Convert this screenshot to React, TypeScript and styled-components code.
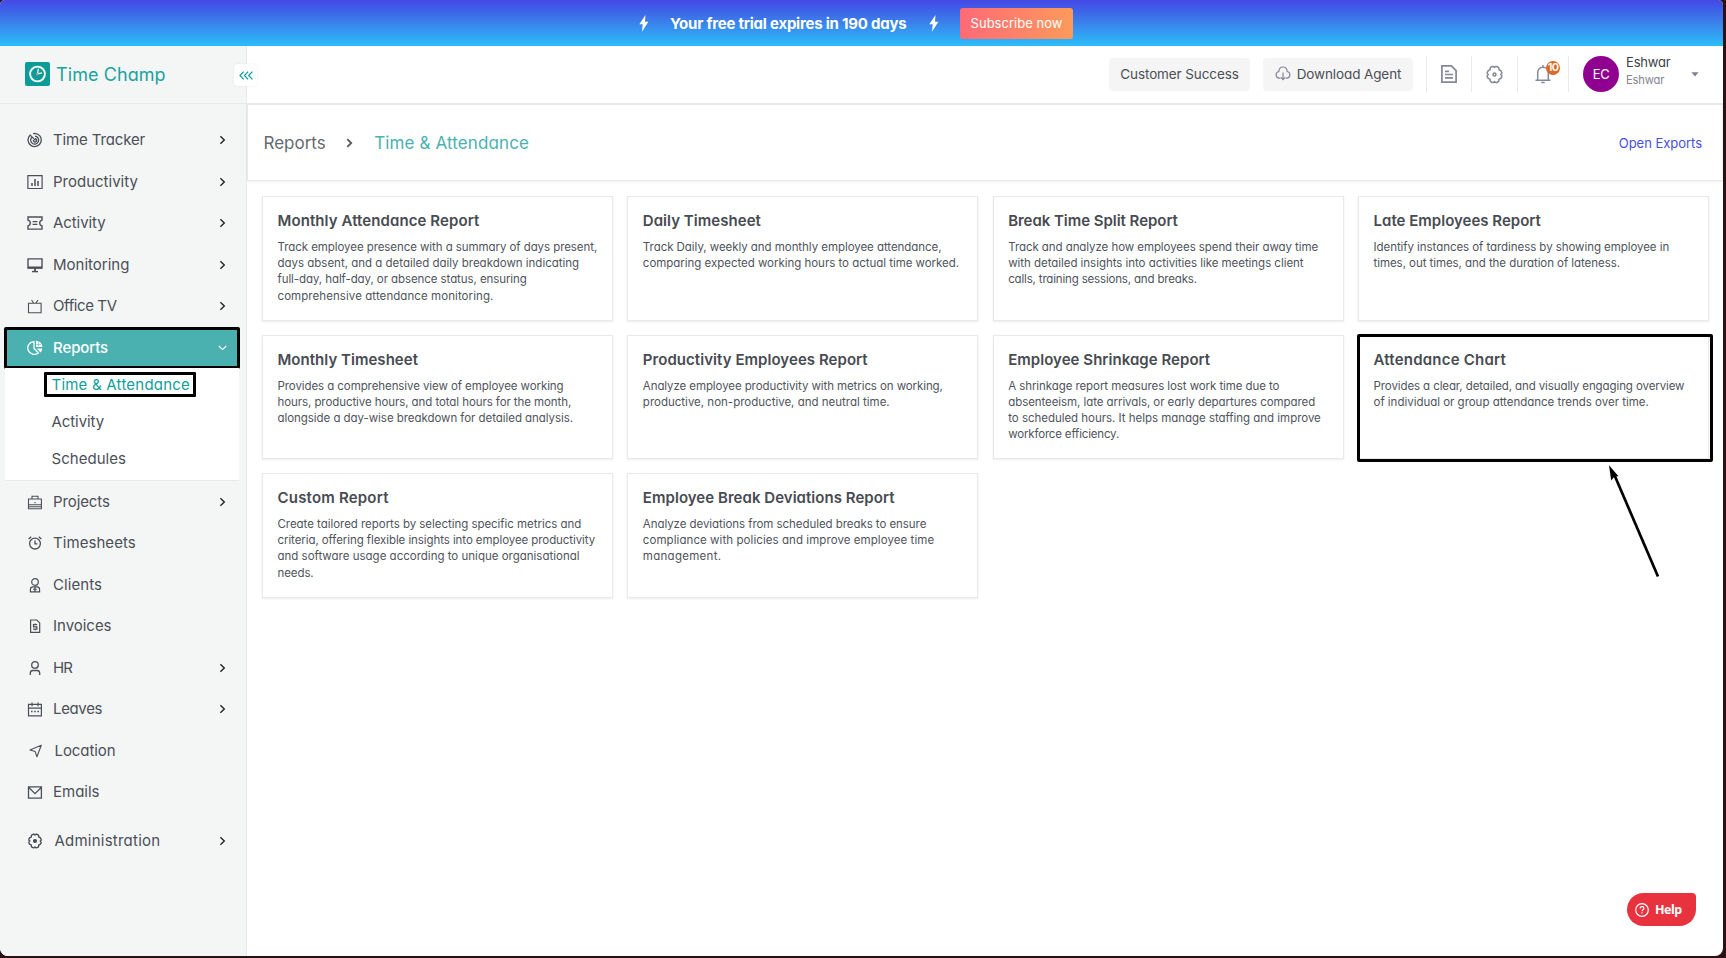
import React from "react";
import styled, { createGlobalStyle, css } from "styled-components";

const GlobalStyle = createGlobalStyle`
  *, *::before, *::after { box-sizing: border-box; }
  body {
    margin: 0;
    background: #2a1113;
    font-family: Inter, "Open Sans", sans-serif;
    font-feature-settings: "cv11";
    color: #4b4f57;
  }
  h2, p { margin: 0; font-weight: inherit; }
`;

const TEAL = "#0f9f9b";
const LINE = "#e6ebea";

const Window = styled.div`
  position: relative;
  display: flex;
  flex-direction: column;
  width: 1723px;
  height: 956px;
  background: #fff;
  border-radius: 5px 5px 8px 8px;
  overflow: hidden;
`;

/* ---------- trial banner ---------- */

const Banner = styled.div`
  display: flex;
  align-items: center;
  height: 46px;
  flex: none;
  padding-left: 639px;
  background: linear-gradient(180deg, #4348e4 0%, #3a82ec 50%, #2bbef9 100%);
  color: #fff;
`;

const BannerText = styled.span`
  width: 238px;
  margin: 0 21px;
  font-size: 15px;
  font-weight: 700;
  letter-spacing: -0.22px;
  white-space: nowrap;
`;

const SubscribeButton = styled.button`
  width: 113px;
  height: 31px;
  margin-left: 21px;
  padding: 0 0 1px;
  border: 0;
  border-radius: 3px;
  background: linear-gradient(90deg, #ff6a76, #fd9a5b);
  color: #fff;
  font: 400 13px Inter, sans-serif;
  font-feature-settings: "cv11";
  letter-spacing: 0.02px;
  white-space: nowrap;
`;

/* ---------- frame ---------- */

const Body = styled.div`
  display: flex;
  flex: 1;
  min-height: 0;
`;

const Sidebar = styled.aside`
  display: flex;
  flex-direction: column;
  width: 247px;
  flex: none;
  background: #f4f6f5;
  border-right: 1px solid ${LINE};
`;

const Main = styled.main`
  display: flex;
  flex-direction: column;
  flex: 1;
  min-width: 0;
`;

/* ---------- sidebar ---------- */

const Brand = styled.div`
  position: relative;
  display: flex;
  align-items: center;
  gap: 6px;
  height: 58px;
  padding: 0 0 1px 25px;
  border-bottom: 1px solid ${LINE};
  color: #1ba29e;
  font-size: 18px;
  letter-spacing: 0.08px;
`;

const CollapseButton = styled.button`
  position: absolute;
  left: 234px;
  top: 18px;
  display: flex;
  align-items: center;
  justify-content: center;
  width: 23px;
  height: 22px;
  padding: 0;
  border: 0;
  border-radius: 4px;
  background: #fff;
  box-shadow: 0 0 2px rgba(0, 0, 0, 0.1);
  color: ${TEAL};
`;

const Nav = styled.nav`
  display: flex;
  flex-direction: column;
  padding-top: 15.25px;
`;

const NavItem = styled.div<{ $indent?: number; $ls?: number; $gapTop?: number; $active?: boolean }>`
  display: flex;
  align-items: center;
  gap: ${(p) => p.$indent ?? 10.5}px;
  height: 41.5px;
  margin-top: ${(p) => p.$gapTop ?? 0}px;
  padding: 0 20px 0 26.5px;
  font-size: 15px;
  letter-spacing: ${(p) => p.$ls ?? 0}px;
  white-space: nowrap;
  ${(p) =>
    p.$active &&
    css`
      width: 236px;
      height: 42px;
      margin: -0.25px 0 -0.25px 4px;
      padding: 0 10px 0 19.5px;
      border: 3px solid #000;
      border-radius: 2px;
      background: #4bb1b0;
      color: #fff;
      font-weight: 500;
    `}
`;

const NavLabel = styled.span`
  flex: 1;
  padding-bottom: 1px;
`;

const SubMenu = styled.div`
  display: flex;
  flex-direction: column;
  align-items: flex-start;
  width: 234px;
  height: 112.5px;
  margin-left: 5px;
  padding: 4px 0 0 39px;
  background: #fff;
  border-bottom: 1px solid ${LINE};
`;

const SubItem = styled.div<{ $current?: boolean; $ls?: number }>`
  display: flex;
  align-items: center;
  height: 37px;
  padding: 0 0 2px 7.5px;
  font-size: 15px;
  letter-spacing: ${(p) => p.$ls ?? 0}px;
  white-space: nowrap;
  ${(p) =>
    p.$current &&
    css`
      width: 152px;
      height: 25px;
      margin-bottom: 7px;
      padding: 0 0 1px 4.5px;
      border: 3px solid #000;
      border-radius: 1px;
      color: ${TEAL};
    `}
`;

/* ---------- header ---------- */

const Header = styled.header`
  display: flex;
  align-items: center;
  justify-content: flex-end;
  height: 59px;
  flex: none;
  padding: 0 24px 1px 0;
  border-bottom: 2px solid ${LINE};
`;

const HeaderButton = styled.button<{ $w: number }>`
  display: flex;
  align-items: center;
  justify-content: center;
  gap: 6px;
  width: ${(p) => p.$w}px;
  height: 33px;
  margin-right: 13px;
  padding: 0 0 1px;
  border: 0;
  border-radius: 4px;
  background: #f5f5f5;
  color: #4b4f57;
  font: 400 13.5px Inter, sans-serif;
  font-feature-settings: "cv11";
  letter-spacing: -0.11px;
  white-space: nowrap;
`;

const Tool = styled.div<{ $w: number; $push?: number }>`
  position: relative;
  display: flex;
  align-items: center;
  justify-content: center;
  width: ${(p) => p.$w}px;
  height: 36px;
  padding-left: ${(p) => p.$push ?? 0}px;
  border-left: 1px solid ${LINE};
  color: #85879a;
`;

const Badge = styled.span`
  position: absolute;
  left: 28px;
  top: 5px;
  width: 14px;
  height: 14px;
  border-radius: 50%;
  background: #db6827;
  color: #fff;
  font-size: 11px;
  font-weight: 600;
  line-height: 13.5px;
  letter-spacing: -0.6px;
  text-align: center;
`;

const Profile = styled.div`
  display: flex;
  align-items: center;
  height: 36px;
  padding-left: 14px;
  border-left: 1px solid ${LINE};
`;

const Avatar = styled.div`
  width: 36px;
  height: 36px;
  border-radius: 50%;
  background: #900090;
  color: #fff;
  font: 400 13px/36px Inter, sans-serif;
  letter-spacing: -0.4px;
  text-align: center;
`;

const Names = styled.div`
  display: flex;
  flex-direction: column;
  width: 65px;
  margin: -5px 0 0 7px;
`;

const Name = styled.span<{ $minor?: boolean }>`
  font-size: ${(p) => (p.$minor ? 11.2 : 13)}px;
  line-height: 17.5px;
  letter-spacing: -0.18px;
  color: ${(p) => (p.$minor ? "#85868f" : "#3b3f47")};
`;

/* ---------- breadcrumb ---------- */

const Crumbs = styled.div`
  display: flex;
  align-items: center;
  height: 76px;
  flex: none;
  padding: 0 20px 0 15.5px;
  border-left: 1px solid ${LINE};
  border-bottom: 1px solid ${LINE};
  border-right: 1px solid #f1f3f3;
  box-shadow: 0 1px 2px rgba(0, 0, 0, 0.06);
  font-size: 17px;
  color: #66696f;
  white-space: nowrap;
  svg { margin: 0 21px 0 20.5px; }
`;

const Current = styled.span`
  flex: 1;
  color: #4bb1b0;
  letter-spacing: 0.12px;
`;

const ExportLink = styled.a`
  font-size: 13px;
  color: #4650da;
  letter-spacing: -0.03px;
`;

/* ---------- report cards ---------- */

const CardGrid = styled.section`
  display: grid;
  grid-template-columns: repeat(4, 351px);
  grid-auto-rows: 124.5px;
  column-gap: 14.35px;
  row-gap: 14px;
  padding: 15px 0 0 15px;
`;

const Card = styled.article`
  position: relative;
  padding: 14px 14px 0 14.5px;
  background: #fff;
  border: 1px solid ${LINE};
  box-shadow: 0 1px 2px rgba(0, 0, 0, 0.08);
`;

const CardTitle = styled.h2<{ $ls: number }>`
  font-size: 15px;
  font-weight: 600;
  line-height: 20px;
  letter-spacing: ${(p) => p.$ls}px;
  color: #474b52;
`;

const CardText = styled.p`
  margin-top: 8px;
  font-size: 11.5px;
  line-height: 16.2px;
  color: #4f545c;
`;

const Line = styled.span<{ $ls: number }>`
  display: block;
  letter-spacing: ${(p) => p.$ls}px;
  white-space: nowrap;
`;

const Highlight = styled.div`
  position: absolute;
  left: -2px;
  top: -2px;
  width: 356px;
  height: 128px;
  border: 3px solid #000;
  border-radius: 2px;
`;

const Arrow = styled.svg`
  position: absolute;
  left: 1600px;
  top: 460px;
`;

const HelpButton = styled.button`
  position: absolute;
  left: 1627px;
  top: 893px;
  display: flex;
  align-items: center;
  gap: 6px;
  width: 69px;
  height: 33px;
  padding: 0 0 0 8px;
  border: 0;
  border-radius: 17px 4px 17px 17px;
  background: #e8323e;
  color: #fff;
  font: 700 12.5px "Noto Sans", sans-serif;
  letter-spacing: -0.5px;
`;

/* ---------- icons ---------- */

const Icon = ({ children, w = 1.2, size = 16 }: { children: React.ReactNode; w?: number; size?: number }) => (
  <svg width={size} height={size} viewBox="0 0 16 16" fill="none" stroke="currentColor" strokeWidth={w}>
    {children}
  </svg>
);

const Bolt = () => (
  <svg width="10" height="17" viewBox="0 0 10 17" fill="#fff">
    <path d="M6.5 0 .3 9.3h3.4L3 16.8l6.4-10H6z" />
  </svg>
);

const Chevron = () => (
  <svg width="7" height="10" viewBox="0 0 7 10" fill="none" stroke="#22252a" strokeWidth="1.4">
    <path d="M1.4 1.2 5.3 5 1.4 8.8" />
  </svg>
);

const gearPath =
  "M6.1 1.3h1l.9.8.9-.8h1l1.6.9.3 1.9 1.4.6.9 1.5v1l-.9.8.9.9v1l-.9 1.5-1.4.5-.3 1.9-1.6.9h-1L8 14l-.9.7h-1l-1.6-.9-.3-1.9-1.4-.5-.9-1.5v-1L2.8 8l-.9-.8v-1l.9-1.5 1.4-.6.3-1.9z";

const icons: Record<string, React.ReactNode> = {
  tracker: (
    <Icon w={1.3}>
      <path d="M3.1 3.2A6.6 6.6 0 1 0 8 1.4c-.9 0-1.4.1-1.9.3" />
      <path d="M4.9 5.2A4 4 0 1 0 8 4.1M8 6.6A1.7 1.7 0 1 1 6.4 8M2.8 2.6 8.4 8.4" />
    </Icon>
  ),
  productivity: (
    <Icon w={1.2}>
      <path d="M.9 1.7h14.2v12.8H.9z" />
      <path d="M5 9v3M8 5v7M11 7v5" strokeWidth="1.5" />
    </Icon>
  ),
  activity: (
    <Icon w={1.4}>
      <path d="M1 2h14v3.2c-1.7.5-2.3 1.4-2.3 2.9s.6 2.4 2.3 2.9v3.1H1V11c1.7-.5 2.3-1.4 2.3-2.9S2.700 5.700 1 5.200z" />
      <path d="M5.600 6.700h4.800M5.600 9.400h4.800" strokeWidth="1.200" />
    </Icon>
  ),
  monitoring: (
    <Icon w={1.4}>
      <path d="M1 1.900h14v9.200H1z" />
      <path d="M1 10.500h14M8 11v3" strokeWidth="1.800" />
      <path d="M5 14.600h6" />
    </Icon>
  ),
  tv: (
    <Icon w={1.100}>
      <path d="M1.500 5.200h12.600v9.600H1.500zM4.600 2l2 3M10.900 2l-2 3" />
    </Icon>
  ),
  reports: (
    <Icon w={1.300}>
      <path d="M7 1.600a6.400 6.400 0 1 0 4.300 11.300L7 8.400z" />
      <path d="M9 .7A6.300 6.300 0 0 1 15.300 7H9zM9.700 8.600h5.600a6 6 0 0 1-1.800 3.900z" fill="currentColor" stroke="none" />
      <path d="M11.500 1.500v5M9 4.500h5" stroke="#4bb1b0" strokeWidth=".5" />
    </Icon>
  ),
  projects: (
    <Icon w={1.100}>
      <path d="M1.500 5h12.900v9.800H1.500zM5 5V2.300h6V5M1.500 10.800h12.900M1.500 12.800h12.900" />
      <path d="M7.400 8.600h1.200" />
    </Icon>
  ),
  timesheets: (
    <Icon w={1.300}>
      <circle cx="8" cy="8.600" r="5.400" />
      <path d="M8 5.600v3.200h2.400M1.600 3.900l2.600-2.200M14.400 3.900l-2.600-2.200" />
    </Icon>
  ),
  clients: (
    <Icon w={1.200}>
      <circle cx="8" cy="5" r="3.300" />
      <path d="M3.400 14.800v-2.200c0-1.700 1-2.700 2.600-2.700h4c1.600 0 2.600 1 2.600 2.700v2.200zM8 10v4.500M6.300 12.300h3.400" />
    </Icon>
  ),
  invoices: (
    <Icon w={1.200}>
      <path d="M3.600 2h6.200l2.900 2.900v9.500H3.600z" />
      <path d="M10.100 6.600H6.500v2.200h3.400v2.300H6.200M8.200 5.500v1M8.200 11v1.300" />
    </Icon>
  ),
  hr: (
    <Icon w={1.300}>
      <circle cx="8" cy="4.900" r="3.300" />
      <path d="M3.300 14.900v-1.700c0-1.700 1-2.700 2.700-2.700h4c1.700 0 2.700 1 2.700 2.700v1.700" />
    </Icon>
  ),
  leaves: (
    <Icon w={1.200}>
      <path d="M1.500 3.400h12.900v11.400H1.500zM1.500 7.200h12.900M5 1.400v3.800M11 1.400v3.800" />
      <path d="M4 10.500h1.600M7.200 10.500h1.600M10.400 10.500H12" strokeWidth="1.500" />
    </Icon>
  ),
  location: (
    <Icon w={1.100}>
      <path d="M14.300 2.200 2.900 6.900l5.300 1.700 1.700 5.200z" strokeLinejoin="round" />
    </Icon>
  ),
  emails: (
    <Icon w={1.300}>
      <path d="M1.500 2.900h12.900v11.200H1.500zM1.800 3.500 8 9.700l6.200-6.200" />
    </Icon>
  ),
  admin: (
    <Icon w={1.400}>
      <path d={gearPath} strokeLinejoin="round" />
      <circle cx="8" cy="8" r="1.400" fill="currentColor" />
    </Icon>
  ),
};

/* ---------- data ---------- */

type Item = { icon: string; label: string; ls?: number; arrow?: boolean; shift?: boolean; gapTop?: number };

const topItems: Item[] = [
  { icon: "tracker", label: "Time Tracker", ls: -0.13, arrow: true },
  { icon: "productivity", label: "Productivity", arrow: true },
  { icon: "activity", label: "Activity", ls: -0.08, arrow: true },
  { icon: "monitoring", label: "Monitoring", arrow: true },
  { icon: "tv", label: "Office TV", ls: -0.4, arrow: true },
];

const bottomItems: Item[] = [
  { icon: "projects", label: "Projects", ls: -0.1, arrow: true },
  { icon: "timesheets", label: "Timesheets", ls: 0.06 },
  { icon: "clients", label: "Clients", ls: 0.08 },
  { icon: "invoices", label: "Invoices", ls: -0.02 },
  { icon: "hr", label: "HR", ls: -1, arrow: true },
  { icon: "leaves", label: "Leaves", ls: -0.35, arrow: true },
  { icon: "location", label: "Location", ls: -0.07, shift: true },
  { icon: "emails", label: "Emails" },
  { icon: "admin", label: "Administration", ls: 0.23, arrow: true, shift: true, gapTop: 7 },
];

type Report = { title: string; ls: number; lines: [string, number][]; marked?: boolean };

const reports: Report[] = [
  {
    title: "Monthly Attendance Report",
    ls: 0.09,
    lines: [
      ["Track employee presence with a summary of days present,", -0.07],
      ["days absent, and a detailed daily breakdown indicating", -0.01],
      ["full-day, half-day, or absence status, ensuring", -0.08],
      ["comprehensive attendance monitoring.", 0.07],
    ],
  },
  {
    title: "Daily Timesheet",
    ls: 0.04,
    lines: [
      ["Track Daily, weekly and monthly employee attendance,", -0.05],
      ["comparing expected working hours to actual time worked.", -0.03],
    ],
  },
  {
    title: "Break Time Split Report",
    ls: -0.04,
    lines: [
      ["Track and analyze how employees spend their away time", -0.07],
      ["with detailed insights into activities like meetings client", -0.04],
      ["calls, training sessions, and breaks.", -0.17],
    ],
  },
  {
    title: "Late Employees Report",
    ls: 0.01,
    lines: [
      ["Identify instances of tardiness by showing employee in", -0.06],
      ["times, out times, and the duration of lateness.", -0.06],
    ],
  },
  {
    title: "Monthly Timesheet",
    ls: 0.03,
    lines: [
      ["Provides a comprehensive view of employee working", -0.08],
      ["hours, productive hours, and total hours for the month,", -0.08],
      ["alongside a day-wise breakdown for detailed analysis.", -0.05],
    ],
  },
  {
    title: "Productivity Employees Report",
    ls: 0.05,
    lines: [
      ["Analyze employee productivity with metrics on working,", -0.09],
      ["productive, non-productive, and neutral time.", 0],
    ],
  },
  {
    title: "Employee Shrinkage Report",
    ls: 0.04,
    lines: [
      ["A shrinkage report measures lost work time due to", -0.08],
      ["absenteeism, late arrivals, or early departures compared", -0.07],
      ["to scheduled hours. It helps manage staffing and improve", -0.03],
      ["workforce efficiency.", -0.17],
    ],
  },
  {
    title: "Attendance Chart",
    ls: 0.22,
    marked: true,
    lines: [
      ["Provides a clear, detailed, and visually engaging overview", -0.1],
      ["of individual or group attendance trends over time.", -0.02],
    ],
  },
  {
    title: "Custom Report",
    ls: 0.2,
    lines: [
      ["Create tailored reports by selecting specific metrics and", -0.04],
      ["criteria, offering flexible insights into employee productivity", -0.08],
      ["and software usage according to unique organisational", 0],
      ["needs.", -0.09],
    ],
  },
  {
    title: "Employee Break Deviations Report",
    ls: 0.04,
    lines: [
      ["Analyze deviations from scheduled breaks to ensure", -0.06],
      ["compliance with policies and improve employee time", 0.07],
      ["management.", 0.28],
    ],
  },
];

const NavRow = ({ item }: { item: Item }) => (
  <NavItem $ls={item.ls} $indent={item.shift ? 12 : 10.5} $gapTop={item.gapTop}>
    {icons[item.icon]}
    <NavLabel>{item.label}</NavLabel>
    {item.arrow && <Chevron />}
  </NavItem>
);

export default function App() {
  return (
    <>
      <GlobalStyle />
      <Window>
        <Banner>
          <Bolt />
          <BannerText>Your free trial expires in 190 days</BannerText>
          <Bolt />
          <SubscribeButton>Subscribe now</SubscribeButton>
        </Banner>
        <Body>
          <Sidebar>
            <Brand>
              <svg width="25" height="24" viewBox="0 0 25 24">
                <rect width="25" height="24" rx="2" fill="#0b9c98" />
                <circle cx="12.500" cy="12" r="7.400" fill="none" stroke="#fff" strokeWidth="1.900" />
                <path d="M13.400 6.600 12.500 12l4.600-1.100" fill="none" stroke="#e6f5f4" strokeWidth="1.300" />
                <circle cx="12.300" cy="12.200" r="1.100" fill="#e0817c" />
              </svg>
              Time Champ
              <CollapseButton>
                <svg width="14" height="9" viewBox="0 0 14 9" fill="none" stroke="currentColor" strokeWidth="1.200">
                  <path d="M4.700.6 1 4.500l3.700 3.900M9.100.6 5.400 4.500l3.700 3.900M13.400.6 9.700 4.500l3.700 3.900" />
                </svg>
              </CollapseButton>
            </Brand>
            <Nav>
              {topItems.map((item) => (
                <NavRow key={item.label} item={item} />
              ))}
              <NavItem $active $ls={-0.1}>
                {icons.reports}
                <NavLabel>Reports</NavLabel>
                <svg width="9" height="6" viewBox="0 0 9 6" fill="none" stroke="#fff" strokeWidth="1.100">
                  <path d="M.8 1l3.700 3.600L8.200 1" />
                </svg>
              </NavItem>
              <SubMenu>
                <SubItem $current $ls={0.22}>Time &amp; Attendance</SubItem>
                <SubItem $ls={-0.08}>Activity</SubItem>
                <SubItem $ls={0.04}>Schedules</SubItem>
              </SubMenu>
              {bottomItems.map((item) => (
                <NavRow key={item.label} item={item} />
              ))}
            </Nav>
          </Sidebar>
          <Main>
            <Header>
              <HeaderButton $w={141}>Customer Success</HeaderButton>
              <HeaderButton $w={150}>
                <svg width="16" height="15" viewBox="0 0 16 15" fill="none" stroke="#85879a" strokeWidth="1.200">
                  <path d="M5.300 12.200H4.200a3.400 3.400 0 0 1-.4-6.700C4 2.700 5.700 1 8 1s4 1.700 4.200 4.500a3.400 3.400 0 0 1-.4 6.700h-1.100" />
                  <path d="M8 6.500v7M5.800 11.300 8 13.600l2.200-2.300" />
                </svg>
                Download Agent
              </HeaderButton>
              <Tool $w={45}>
                <svg width="16" height="18" viewBox="0 0 16 18" fill="none" stroke="currentColor" strokeWidth="1.700">
                  <path d="M.9.900h9.400l4.800 4.700v11.500H.9z" />
                  <path d="M4 6.300h4M4 9.500h8M4 12.900h8" />
                </svg>
              </Tool>
              <Tool $w={46}>
                <Icon size={19} w={1.300}>
                  <path d={gearPath} strokeLinejoin="round" />
                  <circle cx="8" cy="8" r="1.200" />
                </Icon>
              </Tool>
              <Tool $w={51}>
                <svg width="16" height="20" viewBox="0 0 16 20" fill="none" stroke="currentColor" strokeWidth="1.500">
                  <path d="M.5 16.200h15M2.700 16V8.500C2.700 5.400 4.800 3.300 8 3.300s5.300 2.100 5.300 5.200V16M8 3.300V1" />
                  <path d="M6.300 18.500h3.400" />
                </svg>
                <Badge>10</Badge>
              </Tool>
              <Profile>
                <Avatar>EC</Avatar>
                <Names>
                  <Name>Eshwar</Name>
                  <Name $minor>Eshwar</Name>
                </Names>
                <svg width="8" height="5" viewBox="0 0 8 5" fill="#7d8090">
                  <path d="M.4.300h7.200L4 4.500z" />
                </svg>
              </Profile>
            </Header>
            <Crumbs>
              Reports
              <svg width="7" height="10" viewBox="0 0 7 10" fill="none" stroke="#55585e" strokeWidth="1.800">
                <path d="M1.300 1.200 5.200 5 1.300 8.800" />
              </svg>
              <Current>Time &amp; Attendance</Current>
              <ExportLink>Open Exports</ExportLink>
            </Crumbs>
            <CardGrid>
              {reports.map((r) => (
                <Card key={r.title}>
                  <CardTitle $ls={r.ls}>{r.title}</CardTitle>
                  <CardText>
                    {r.lines.map(([text, ls]) => (
                      <Line key={text} $ls={ls}>{text}</Line>
                    ))}
                  </CardText>
                  {r.marked && <Highlight />}
                </Card>
              ))}
            </CardGrid>
          </Main>
        </Body>
        <Arrow width="64" height="122" viewBox="0 0 64 122">
          <path d="M14 14 58 116.500" stroke="#000" strokeWidth="2.700" />
          <path d="M9 5.300 18.500 16.200l-4 .4-3.300 3.800z" />
        </Arrow>
        <HelpButton>
          <svg width="14" height="14" viewBox="0 0 14 14" fill="none" stroke="#fff" strokeWidth="1.200">
            <circle cx="7" cy="7" r="6.300" />
            <path d="M5.100 5.600C5.100 4.400 5.900 3.700 7 3.700s1.900.7 1.900 1.700c0 1.300-1.900 1.400-1.900 2.900M7 9.300v1.300" />
          </svg>
          Help
        </HelpButton>
      </Window>
    </>
  );
}
